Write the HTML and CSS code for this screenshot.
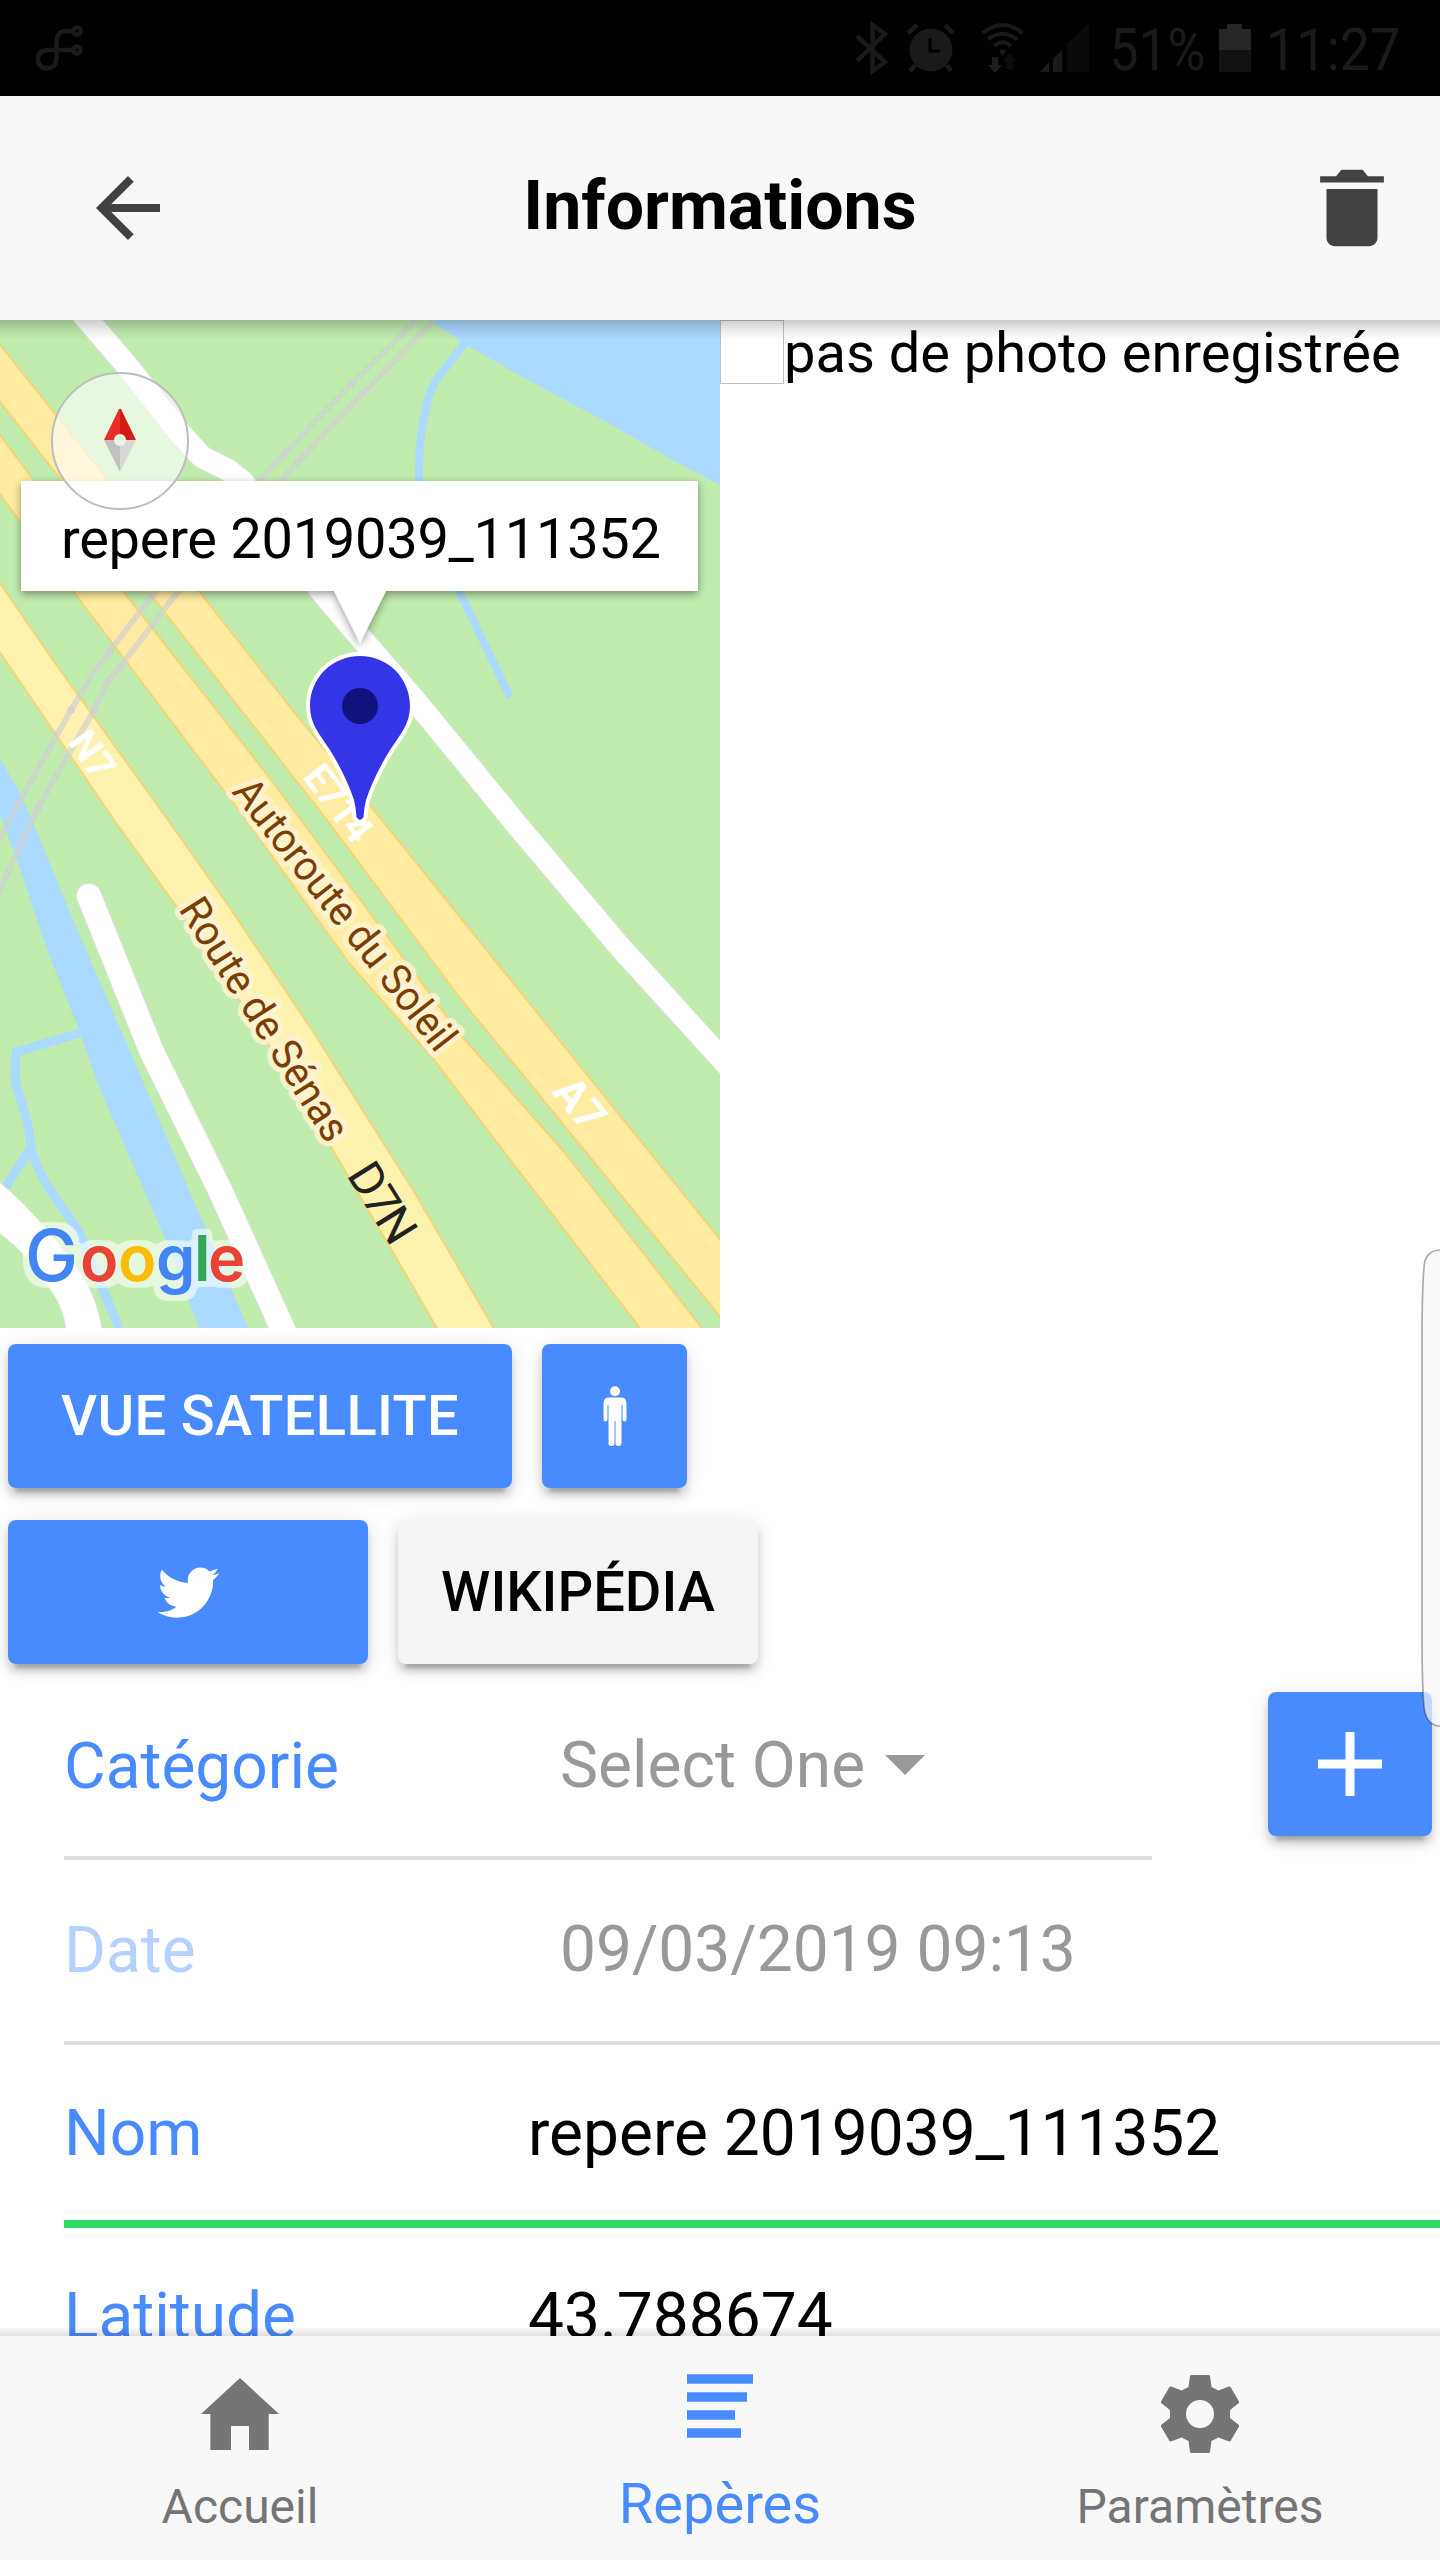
FILE: index.html
```
<!DOCTYPE html>
<html lang="fr">
<head>
<meta charset="utf-8">
<title>Informations</title>
<link rel="stylesheet" href="styles.css">
</head>
<body>
<div class="screen">
  <div class="status">
    <svg class="status-app" viewBox="30 0 60 96" width="60" height="96"><g fill="none" stroke="#1a1a1a" stroke-width="4.5"><path d="M73 31H67Q56.5 31 56.5 42V59Q56 68 47 68.5Q38 68 38 59Q38 50 49 50H73"/><circle cx="77" cy="31" r="3.6"/><circle cx="77" cy="50" r="3.6"/></g></svg>
    <svg viewBox="840 0 60 96" width="60" height="96"><path d="M857 36L885 62L872.500 71V25L885 34L857 61" fill="none" stroke="#1a1a1a" stroke-width="4.500"/></svg>
    <svg viewBox="900 0 60 96" width="60" height="96"><circle cx="931" cy="50" r="21.500" fill="#1a1a1a"/><path d="M930 38V51H940" fill="none" stroke="#000" stroke-width="3"/><path d="M908 33L917 25M945 25L953 33M915 65L910 71M947 65L951 71" stroke="#1a1a1a" stroke-width="4.500"/></svg>
    <svg viewBox="960 0 70 96" width="70" height="96"><g fill="none" stroke="#1a1a1a" stroke-width="4"><path d="M982.500 33Q1002.500 17 1022.500 33"/><path d="M988 39.500Q1002.500 28 1017 39.500"/><path d="M994 46Q1002.500 38.500 1011 46"/></g><path d="M999 51Q1002.500 48 1006 51L1002.500 56Z" fill="#1a1a1a"/><path d="M992 57h6v8h4l-7 8l-7-8h4z" fill="#1f1f1f"/><path d="M1007 69h6v-8h4l-7-8l-7 8h4z" fill="#0d0d0d"/></svg>
    <svg viewBox="1030 0 70 96" width="70" height="96"><path d="M1040 72L1049 62V72ZM1053 72V59L1062 50V72Z" fill="#1a1a1a"/><path d="M1067 72V44L1089 23V72Z" fill="#0a0a0a"/></svg>
    <span class="status-text pct">51%</span>
    <svg viewBox="1210 0 56 96" width="56" height="96"><path d="M1219 50V29H1227V24H1242V29H1251V50Z" fill="#262626"/><path d="M1219 50H1251V72H1219Z" fill="#121212"/></svg>
    <span class="status-text clock">11:27</span>
  </div>

  <header class="header">
    <svg class="back" viewBox="0 0 24 24" width="96" height="96"><path fill="#424242" d="M20 11H7.830l5.590-5.590L12 4l-8 8 8 8 1.410-1.410L7.830 13H20z"/></svg>
    <h1 class="title">Informations</h1>
    <svg class="trash" viewBox="0 0 512 512" width="102" height="102"><path fill="#424242" d="M128 405.400C128 428.800 147.200 448 170.700 448h170.700C364.800 448 384 428.800 384 405.400V160H128zM416 96h-80l-26.800-32H202.800L176 96H96v32h320z"/></svg>
  </header>

  <main class="content">
    <div class="media">
      <svg class="map" viewBox="0 320 720 1008" width="720" height="1008">
        <defs>
          <filter id="shade" x="-10%" y="-20%" width="120%" height="150%"><feDropShadow dx="0" dy="3" stdDeviation="4" flood-color="#000" flood-opacity=".4"/></filter>
          <filter id="halo" x="-10%" y="-20%" width="120%" height="140%" color-interpolation-filters="sRGB">
            <feMorphology in="SourceAlpha" operator="dilate" radius="6"/>
            <feGaussianBlur stdDeviation="2"/>
            <feComponentTransfer><feFuncR type="linear" slope="0" intercept="1"/><feFuncG type="linear" slope="0" intercept="1"/><feFuncB type="linear" slope="0" intercept="1"/><feFuncA type="linear" slope="4" intercept="-1.5"/></feComponentTransfer>
            <feColorMatrix values="1 0 0 0 0 0 1 0 0 0 0 0 1 0 0 0 0 0 .6 0" result="glow"/>
            <feMerge><feMergeNode in="glow"/><feMergeNode in="SourceGraphic"/></feMerge>
          </filter>
        </defs>
        <rect y="320" width="720" height="1008" fill="#c0ecae"/>
        <g fill="#aadaff">
          <path d="M429 320L441 328L466 345L546 390L599 418L680 464L720 485V320Z"/>
          <path d="M0 758L21 795L39 837L69 910L83 943L138 1070L204 1225L248 1328H199L170 1250L99 1087L78 1027L46 947L17 860L0 815Z"/>
        </g>
        <g fill="none" stroke="#aadaff">
          <path stroke-width="8" d="M465 343L436 380Q430 392 427 403Q418 440 419 481L459 591L510 697"/>
          <path stroke-width="9" d="M80 1033L16.500 1052Q14 1070 16 1085Q30 1125 31 1148L5 1188M31 1148Q35 1165 48 1187L78 1230L119 1328"/>
        </g>
        <path fill="#fff" stroke="#dfe3dc" d="M-2 1181Q22 1200 50 1233Q72 1260 83 1277Q98 1300 102 1330H66Q64 1312 55 1297Q30 1255 -2 1232Z"/>
        <g fill="none" stroke-linecap="round" stroke-linejoin="round">
          <path stroke="#dfe3dc" stroke-width="26" d="M89 896L151 1050L220 1190L290 1345"/>
          <path stroke="#fff" stroke-width="24" d="M89 896L151 1050L220 1190L290 1345"/>
          <path stroke="#dfe3dc" stroke-width="24" d="M80 311L129 368L179 432L202 457L228 470L243 482L321 591L354 630L413 698L464 760L517 825L620 947L730 1068"/>
          <path stroke="#fff" stroke-width="22" d="M80 311L129 368L179 432L202 457L228 470L243 482L321 591L354 630L413 698L464 760L517 825L620 947L730 1068"/>
        </g>
        <g stroke="#f5d377" stroke-width="2" fill="#ffeba1">
          <path d="M-3 341L108 480L199 591L294 712L382 820L505 973L723 1243V1320L459 997L327 820L148 591L62 481L-3 398Z"/>
          <path d="M-3 431L34 481L123 591L269 777L301 820L459 1033L565 1153L702 1328L704 1332H643L505 1153L434 1060L349 963L246 820L73 591L21 523L-3 490Z"/>
          <path fill="#fff2af" d="M-3 579L55 663L168 820L230 908L312 1030L413 1190L496 1332H439L390 1247L331 1147L266 1040L179 910L114 820L-3 648Z"/>
        </g>
        <g fill="none" stroke="#cfcfcf" stroke-opacity=".65" stroke-width="6">
          <path d="M416 320L351 384L285 453L156 591L109 652L92 675L71 710L16 808L-3 843"/>
          <path d="M434 320L363 393L298 462L176 594L120 667L108 681L94 710L38 808L-3 896"/>
        </g>
        <g fill="#cfcfd4" fill-opacity=".6">
          <circle cx="351" cy="384" r="4"/><circle cx="285" cy="453" r="4"/><circle cx="109" cy="652" r="4"/><circle cx="71" cy="710" r="4"/><circle cx="16" cy="808" r="4"/>
          <circle cx="363" cy="393" r="4"/><circle cx="298" cy="462" r="4"/><circle cx="120" cy="667" r="4"/><circle cx="108" cy="681" r="4"/><circle cx="94" cy="710" r="4"/><circle cx="38" cy="808" r="4"/>
        </g>
        <g class="road-ref">
          <text transform="translate(67 742) rotate(55)">N7</text>
          <text transform="translate(302 777) rotate(53)" textLength="86">E714</text>
          <text class="wide" transform="translate(551 1092) rotate(51)">A7</text>
        </g>
        <g class="road-name">
          <text transform="translate(231 792) rotate(51.9)" textLength="333" lengthAdjust="spacingAndGlyphs">Autoroute du Soleil</text>
          <text transform="translate(178 909) rotate(57.700)" textLength="279" lengthAdjust="spacingAndGlyphs">Route de Sénas</text>
        </g>
        <text class="road-dark" transform="translate(346 1175) rotate(58)" textLength="86">D7N</text>

        <text class="logo" filter="url(#halo)"><tspan class="cap blue" x="25" y="1281">G</tspan><tspan class="red" x="80">o</tspan><tspan class="yellow" x="118">o</tspan><tspan class="blue" x="156">g</tspan><tspan class="green" x="194">l</tspan><tspan class="red" x="208">e</tspan></text>

        <path filter="url(#shade)" fill="#fff" d="M21 481H698V591H386L360 643L334 591H21Z"/>
        <text class="popup-text" x="61" y="558" textLength="600">repere 2019039_111352</text>

        <path fill="#3535e8" stroke="#fff" stroke-width="8" paint-order="stroke" stroke-linejoin="round" d="M360 656C388 656 410 678 410 706C410 723 402 732 390 750Q374 776 366 800Q364 808 363.500 817Q360 823 356.500 817Q356 808 354 800Q346 776 330 750C318 732 310 723 310 706C310 678 332 656 360 656Z"/>
        <circle cx="360" cy="706" r="18" fill="#12127d"/>

        <circle cx="120" cy="441" r="68" fill="#fff" fill-opacity=".62" stroke="#bdbdbd" stroke-width="2"/>
        <path fill="#ea2b27" d="M104 440L119 409H120V440Z"/><path fill="#d31c18" d="M136 440L121 409H120V440Z"/>
        <path fill="#c1c1c1" d="M104 440L119.500 471H120V440Z"/><path fill="#d8d8d8" d="M136 440L120.500 471H120V440Z"/>
        <circle cx="120" cy="440" r="6" fill="#e9f8e3"/>
      </svg>
      <div class="photo"><span class="photo-frame"></span><span>pas de photo enregistrée</span></div>
    </div>

    <div class="actions">
      <button class="btn satellite">VUE SATELLITE</button>
      <button class="btn person"><svg viewBox="0 0 24 60" width="24" height="60"><g fill="#fff"><circle cx="12" cy="5.200" r="5"/><path d="M5 11.500H19Q23.500 12 23.500 18V33Q23.500 35.500 21.500 35.500Q19.500 35.500 19.500 33V19H18.500V57.500Q18.300 60 15.500 60Q12.500 60 12.500 57.500V35H11.500V57.500Q11.500 60 8.500 60Q5.700 60 5.500 57.500V19H4.500V33Q4.500 35.500 2.500 35.500Q.5 35.500 .5 33V18Q.5 12 5 11.500Z"/></g></svg></button>
    </div>
    <div class="actions">
      <button class="btn half"><svg viewBox="0 0 512 512" width="67" height="67"><path fill="#fff" d="M492 109.500c-17.400 7.700-36 12.900-55.600 15.300 20-12 35.400-31 42.600-53.600-18.700 11.100-39.400 19.200-61.500 23.500C399.800 75.800 374.600 64 346.800 64c-53.500 0-96.800 43.400-96.800 96.900 0 7.600.8 15 2.500 22.100-80.500-4-151.900-42.600-199.600-101.300-8.300 14.300-13.100 31-13.100 48.700 0 33.600 17.200 63.300 43.200 80.700-16-.4-31-4.800-44-12.100v1.200c0 47 33.400 86.100 77.700 95-8.100 2.200-16.700 3.400-25.500 3.400-6.200 0-12.300-.6-18.200-1.800 12.300 38.500 48.100 66.500 90.500 67.300-33.100 26-74.900 41.500-120.300 41.500-7.800 0-15.500-.5-23.100-1.400C62.800 432 113.700 448 168.300 448 346.600 448 444 300.300 444 172.200c0-4.200-.1-8.400-.3-12.500C462.600 146 479 129 492 109.500z"/></svg></button>
      <button class="btn half light">WIKIPÉDIA</button>
    </div>

    <div class="category">
      <div class="row"><span class="label">Catégorie</span><span class="value muted">Select One</span><span class="caret"></span></div>
      <button class="btn add"><svg viewBox="0 0 64 64" width="64" height="64"><path fill="#fff" d="M27.500 0h9v27.500H64v9H36.500V64h-9V36.500H0v-9h27.500z"/></svg></button>
    </div>
    <div class="row date"><span class="label faded">Date</span><span class="value muted">09/03/2019 09:13</span></div>
    <div class="row name"><span class="label">Nom</span><span class="value">repere 2019039_111352</span></div>
    <div class="row lat"><span class="label">Latitude</span><span class="value">43.788674</span></div>
  </main>

  <nav class="tabs">
    <a class="tab"><svg viewBox="0 0 512 512" width="96" height="96"><path fill="#757575" d="M208 448V320h96v128h105V256H464L256 64 48 256h50v192z"/></svg><span>Accueil</span></a>
    <a class="tab active"><svg viewBox="-48 -48 96 96" width="96" height="96"><path fill="#488aff" d="M-33-39.700H33v9.400H-33zM-33-21.700H27v9.400H-33zM-33-3.700H15v9.400H-33zM-33 14.300H21v9.400H-33z"/></svg><span>Repères</span></a>
    <a class="tab"><svg viewBox="-48 -48 96 96" width="96" height="96"><path fill="#757575" fill-rule="evenodd" d="M-9-39H9L10-38L11.500-27L18.400-23.500L29-27.500L30.500-27L39-12.500V-11L30-4V4L39 11V12.500L30.500 27L29 27.500L18.400 23.500L11.500 27L10 38L9 39H-9L-10 38L-11.500 27L-18.400 23.500L-29 27.500L-30.500 27L-39 12.500V11L-30 4V-4L-39-11V-12.500L-30.500-27L-29-27.500L-18.400-23.500L-11.500-27L-10-38ZM14 0A14 14 0 1 0-14 0A14 14 0 1 0 14 0Z"/></svg><span>Paramètres</span></a>
  </nav>

  <svg class="edge-handle" viewBox="0 0 24 484" width="24" height="484"><path fill="#f8f8f8" fill-opacity=".7" stroke="#000" stroke-opacity=".32" stroke-width="1.700" d="M30 4H24C16 4 10 9 8.500 17Q6 36 6 100V384Q6 448 8.500 464C10 474 16 480 24 480H30Z"/></svg>
</div>
</body>
</html>
```
FILE: styles.css
```
* { box-sizing: border-box; }
body { margin: 0; background: #fff; font-family: Roboto, sans-serif; color: #000; }
svg { display: block; flex: none; }
.screen { position: relative; width: 1440px; height: 2560px; overflow: hidden; display: flex; flex-direction: column; background: #fff; }

.status { flex: none; height: 96px; background: #000; display: flex; align-items: center; padding-left: 30px; }
.status-app { margin-right: 750px; }
.status-text { flex: none; color: #1a1a1a; font-size: 60px; line-height: 96px; white-space: nowrap; transform-origin: left center; transform: scaleX(.86); padding-top: 3px; }
.pct { width: 110px; padding-left: 11px; }
.clock { width: 174px; transform: scaleX(.9); }

.header { position: relative; z-index: 2; flex: none; height: 224px; background: #f8f8f8; display: flex; align-items: center; justify-content: space-between; padding: 0 37px 0 80px; }
.header::after { content: ""; position: absolute; left: 0; right: 0; top: 100%; height: 20px; background: linear-gradient(rgba(0,0,0,.2), rgba(0,0,0,.07) 55%, transparent); }
.title { margin: 0; flex: 1; text-align: center; font-size: 68px; font-weight: 700; line-height: 80px; padding: 0 37px 5px 0; }
.back { margin: 0; }

.content { flex: none; height: 2016px; overflow: hidden; }
.media { display: grid; grid-template-columns: 720px 720px; height: 1008px; }
.photo { display: flex; align-items: flex-start; font-size: 56px; line-height: 66px; white-space: nowrap; }
.photo-frame { flex: none; width: 64px; height: 64px; border: 1px solid #c0c0c0; }

.map text { font-family: Roboto, sans-serif; }
.road-ref text { font-size: 39px; font-weight: 700; fill: #fff; }
.road-ref .wide { font-size: 44px; }
.road-name text { font-size: 42px; fill: #7a3e05; stroke: #fff4d3; stroke-opacity: .85; stroke-width: 11px; stroke-linejoin: round; paint-order: stroke; }
.map .road-dark { font-size: 47px; fill: #222; }
.map .popup-text { font-size: 56px; }
.map .logo { font-family: Inter, sans-serif; font-size: 63px; font-weight: 600; }
.logo .cap { font-size: 71px; font-weight: 500; }
.blue { fill: #4285f4; } .red { fill: #ea4335; } .yellow { fill: #fbbc05; } .green { fill: #34a853; }

.actions { display: flex; gap: 30px; padding: 16px 8px; }
.btn { flex: none; height: 144px; padding: 0; border: 0; border-radius: 8px; background: #488aff; color: #fff; font: 500 56px/144px Roboto, sans-serif; display: flex; align-items: center; justify-content: center; box-shadow: 0 12px 4px -8px rgba(0,0,0,.2), 0 8px 8px 0 rgba(0,0,0,.14), 0 4px 20px 0 rgba(0,0,0,.12); }
.satellite { width: 504px; letter-spacing: .4px; }
.person { width: 145px; }
.half { width: 360px; }
.light { background: #f4f4f4; color: #000; }
.add { width: 164px; margin: 12px 8px 0 0; }

.category { display: flex; justify-content: space-between; align-items: flex-start; height: 180px; }
.category .row { width: 1088px; }
.row { display: flex; align-items: center; margin-left: 64px; height: 180px; border-bottom: 4px solid #dedede; font-size: 64px; line-height: 76px; white-space: nowrap; padding-bottom: 3px; }
.label { width: 464px; color: #488aff; }
.faded { color: #b6d0ff; }
.muted { color: #999; padding-left: 32px; margin-top: -2px; }
.caret { margin: -4px 0 0 20px; border: 20px solid transparent; border-top-color: #999; border-bottom: 0; }
.date { height: 185px; padding-bottom: 0; }
.name { height: 183px; border-bottom: 8px solid #32db64; padding: 3px 0 0; }
.lat { border: 0; }

.tabs { position: relative; z-index: 2; flex: none; height: 224px; background: #f8f8f8; display: grid; grid-template-columns: repeat(3, 480px); }
.tabs::before { content: ""; position: absolute; left: 0; right: 0; bottom: 100%; height: 8px; background: linear-gradient(rgba(0,0,0,.03), rgba(0,0,0,.12)); }
.tab { display: flex; flex-direction: column; align-items: center; padding-top: 30px; color: #757575; font-size: 48px; line-height: 56px; }
.tab span { margin-top: 17px; }
.active { color: #488aff; font-size: 56px; line-height: 66px; }
.tab.active span { margin-top: 9px; }

.edge-handle { position: absolute; right: 0; top: 1246px; z-index: 3; }
```
